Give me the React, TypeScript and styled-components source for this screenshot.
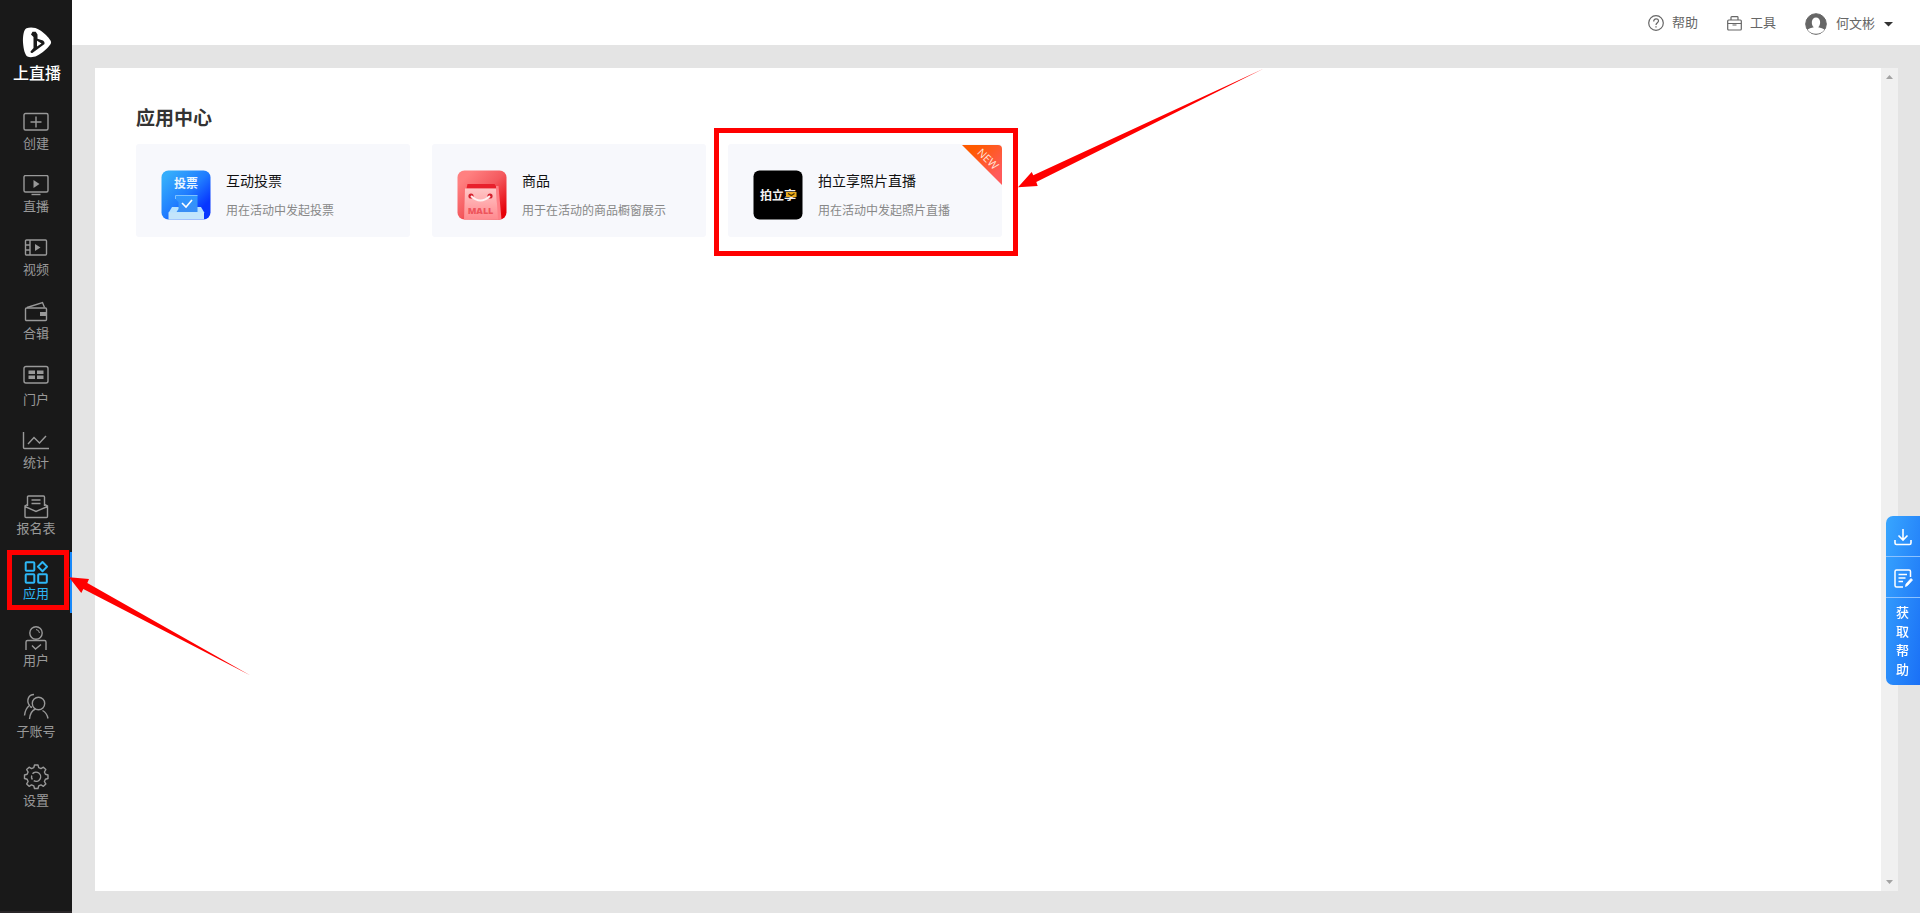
import React from 'react';
import styled, { createGlobalStyle, css } from 'styled-components';

const GlobalStyle = createGlobalStyle`
  *, *::before, *::after { box-sizing: border-box; }
  body {
    margin: 0;
    background: #e4e4e4;
    color: #333;
    font-family: "Liberation Sans", "Noto Sans CJK SC", sans-serif;
    font-size: 13px;
  }
  a { color: inherit; text-decoration: none; }
  button { font: inherit; color: inherit; border: 0; background: none; padding: 0; cursor: pointer; }
  svg { display: block; flex: none; }
`;

const Page = styled.div`
  display: flex;
  height: 100vh;
  overflow: hidden;
`;

const Sidebar = styled.aside`
  flex: none;
  width: 72px;
  border-bottom: 2px solid #2a2628;
  background: #191919;
  color: #999;
`;

const Brand = styled.a`
  display: flex;
  flex-direction: column;
  align-items: center;
  gap: 6px;
  height: 104px;
  padding: 27px 0 0 2px;
  color: #fff;
  font-size: 16px;
  font-weight: 500;
  line-height: 20px;
`;

const Nav = styled.nav`
  display: flex;
  flex-direction: column;
  gap: 4px;
`;

const NavLink = styled.a<{ $active?: boolean }>`
  position: relative;
  display: flex;
  flex-direction: column;
  align-items: center;
  padding: 8px 0 9px;
  line-height: 20px;
  ${(p) =>
    p.$active &&
    css`
      color: #2db7f5;
      box-shadow: inset -2px 0 0 #1989fa;
    `}
`;

const Main = styled.div`
  flex: 1;
  min-width: 0;
  display: flex;
  flex-direction: column;
`;

const Header = styled.header`
  flex: none;
  display: flex;
  justify-content: flex-end;
  align-items: flex-start;
  height: 45px;
  padding: 12px 27px 0 0;
  background: #fff;
  color: #666;
  line-height: 22px;
`;

const HeaderLink = styled.a`
  display: flex;
  align-items: center;
  gap: 8px;
  margin-right: 29px;
`;

const Account = styled.button`
  display: flex;
  align-items: center;
  gap: 9px;
  margin-top: 1px;
`;

const Workspace = styled.div`
  flex: 1;
  min-height: 0;
  display: flex;
  padding: 23px 22px 22px 23px;
`;

const Panel = styled.main`
  flex: 1;
  min-width: 0;
  padding: 38px 41px;
  background: #fff;
`;

const ScrollTrack = styled.div`
  flex: none;
  display: flex;
  flex-direction: column;
  justify-content: space-between;
  align-items: center;
  width: 17px;
  padding: 7px 0;
  background: #f0f0f0;
  color: #a3a3a3;
`;

const Title = styled.h1`
  margin: 0 0 12px;
  color: #333;
  font-size: 19px;
  line-height: 26px;
  font-weight: 700;
`;

const Cards = styled.div`
  display: flex;
  flex-wrap: wrap;
  gap: 22px;
`;

const Card = styled.a`
  position: relative;
  display: flex;
  gap: 15px;
  width: 274px;
  height: 93px;
  padding: 26px 0 0 25px;
  border-radius: 3px;
  background: #f7f8fc;
`;

const CardText = styled.div`
  display: flex;
  flex-direction: column;
  gap: 9px;
  padding-top: 1px;
`;

const CardName = styled.h2`
  margin: 0;
  color: #111;
  font-size: 14px;
  line-height: 21px;
  font-weight: 400;
`;

const CardNote = styled.p`
  margin: 0;
  color: #888;
  font-size: 12px;
  line-height: 20px;
  white-space: nowrap;
`;

const NewRibbon = styled.span`
  position: absolute;
  top: 1px;
  right: 0;
`;

const Frame = styled.span<{ $inset: string }>`
  position: absolute;
  inset: ${(p) => p.$inset};
  border: 5px solid #f00;
  pointer-events: none;
`;

const Pointer = styled.svg<{ $left: number; $top: number }>`
  position: absolute;
  z-index: 2;
  left: ${(p) => p.$left}px;
  top: ${(p) => p.$top}px;
  pointer-events: none;
`;

const HelpDock = styled.div`
  position: fixed;
  z-index: 3;
  right: 0;
  bottom: 228px;
  width: 34px;
  display: flex;
  flex-direction: column;
  border-radius: 7px 0 0 7px;
  background: linear-gradient(100deg, #38a6ff, #1a70f6);
  color: #fff;
`;

const DockButton = styled.button`
  display: flex;
  align-items: center;
  justify-content: center;
  height: 41px;
  padding-top: 2px;
  border-bottom: 1px solid #8cc2ff;
  color: #fff;
`;

const DockLabel = styled.button`
  padding: 5px 11px 6px 10px;
  color: #fff;
  font-size: 13px;
  font-weight: 500;
  line-height: 19px;
`;

type Item = { label: string; height: number; art: React.ReactNode; active?: boolean };

const items: Item[] = [
  {
    label: '创建',
    height: 22,
    art: (
      <>
        <rect x="2" y="1.5" width="24" height="16.5" rx="1.5" />
        <path d="M14 4.5v11M8.500 10h11" />
      </>
    ),
  },
  {
    label: '直播',
    height: 22,
    art: (
      <>
        <rect x="2" y="0.500" width="24" height="16.500" rx="1.500" />
        <path d="M9.500 19.500h9" />
        <path d="M11.500 5v8l6-4z" fill="currentColor" stroke="none" />
      </>
    ),
  },
  {
    label: '视频',
    height: 22,
    art: (
      <>
        <rect x="3.500" y="2" width="21" height="15" rx="1" />
        <path d="M8 2v15M3.500 7H8M3.500 12H8" />
        <path d="M13 6v7l5.500-3.500z" fill="currentColor" stroke="none" />
      </>
    ),
  },
  {
    label: '合辑',
    height: 23,
    art: (
      <>
        <rect x="3.500" y="7" width="21" height="12.500" rx="1" />
        <path d="M5 6.500 20.500 1.500 22.500 6.500" />
        <rect x="18" y="11" width="6.500" height="4" fill="currentColor" stroke="none" />
      </>
    ),
  },
  {
    label: '门户',
    height: 25,
    art: (
      <>
        <rect x="2" y="1.500" width="24" height="16.500" rx="2" />
        <path
          d="M6.500 5.500h6.500v3.500H6.500zM15 5.500h6.500v3.500H15zM6.500 10.500h6.500v3.500H6.500zM15 10.500h6.500v3.500H15z"
          fill="currentColor"
          stroke="none"
        />
      </>
    ),
  },
  {
    label: '统计',
    height: 22,
    art: (
      <>
        <path d="M1.500 1v15.500q0 1 1 1H27" />
        <path d="m6 13 6-6.500 5.500 5.500L24 5" />
      </>
    ),
  },
  {
    label: '报名表',
    height: 25,
    art: (
      <>
        <path d="M5.500 12V3q0-1 1-1h15q1 0 1 1v9" />
        <path d="M9.500 6h9M9.500 9.500h9" />
        <path d="M5.500 10.500 3 12v10.500q0 1 1 1h20.500q1 0 1-1V12l-3-1.500M3 12.500l11 5 11.500-5" />
      </>
    ),
  },
  {
    label: '应用',
    height: 24,
    active: true,
    art: (
      <g strokeWidth="2">
        <rect x="3.700" y="2.200" width="8.600" height="8.600" rx=".8" />
        <rect x="3.700" y="14.200" width="8.600" height="8.600" rx=".8" />
        <rect x="16.200" y="14.200" width="8.600" height="8.600" rx=".8" />
        <path d="m20.500 2 4.600 4.600-4.600 4.600-4.600-4.600z" strokeLinejoin="round" />
      </g>
    ),
  },
  {
    label: '用户',
    height: 26,
    art: (
      <>
        <circle cx="14" cy="8" r="6.200" />
        <path d="M14 4.500q3 .300 3.500 3.500" strokeWidth="1" />
        <path d="M4 25v-8q0-1.500 1.500-1.500h17q1.500 0 1.500 1.500v8M10 20.500l3.500 3.500 5.500-4.500" />
      </>
    ),
  },
  {
    label: '子账号',
    height: 30,
    art: (
      <>
        <circle cx="16.500" cy="11.500" r="6.200" />
        <path d="M7.500 27q.8-8 6-10M20.500 18.500q4.500 2.500 5.500 8" />
        <path d="M12 2.500C6.500 2.500 4 8.500 7.500 13.500 4 16 3 19 2.500 23.500M8 14.500l2 1" />
      </>
    ),
  },
  {
    label: '设置',
    height: 28,
    art: (
      <>
        <path
          d="M11.800 4.600 12.500 2h3.500l.700 2.600 2.300 1 2.400-1.400 2.400 2.400-1.400 2.400 1 2.300 2.600.700v3.500l-2.600.700-1 2.300 1.400 2.400-2.400 2.400-2.400-1.400-2.300 1-.700 2.600h-3.500l-.700-2.600-2.300-1-2.400 1.400-2.400-2.400 1.400-2.400-1-2.300L2.500 15.500V12l2.600-.700 1-2.300-1.400-2.400 2.400-2.400 2.400 1.400z"
          strokeLinejoin="round"
        />
        <path d="M10.500 10.800a4.600 4.600 0 1 1 1.200 6.900M9.700 12.500a4.600 4.600 0 0 0 .7 4" />
      </>
    ),
  },
];

function NavIcon({ height, children }: { height: number; children: React.ReactNode }) {
  return (
    <svg
      width="28"
      height={height}
      viewBox={`0 0 28 ${height}`}
      fill="none"
      stroke="currentColor"
      strokeWidth="1.400"
      aria-hidden="true"
    >
      {children}
    </svg>
  );
}

function VoteIcon() {
  return (
    <svg width="50" height="50" viewBox="0 0 50 50" aria-hidden="true">
      <defs>
        <linearGradient id="vote" x1="0" y1="0" x2="1" y2="1">
          <stop offset=".1" stopColor="#35adfb" />
          <stop offset=".5" stopColor="#207cff" />
          <stop offset=".8" stopColor="#0736ff" />
        </linearGradient>
        <linearGradient id="slip" x1="0" y1="0" x2="0" y2="1">
          <stop stopColor="#2d96ff" />
          <stop offset="1" stopColor="#3a8ef5" />
        </linearGradient>
      </defs>
      <rect x=".5" y=".5" width="49" height="49" rx="7" fill="url(#vote)" />
      <path d="M11 37h29l3.500 6H7.500z" fill="#b8e2ff" />
      <path d="M7.500 42.500h35.500V49.500h-35.500z" fill="#c3e5fb" />
      <path d="M14.500 25.500h22V42h-21l2-3v-7l-3-3z" fill="url(#slip)" />
      <path d="M14.500 29v-3.500h22" fill="none" stroke="#7dc2ff" strokeWidth="1" />
      <path d="m21 33 4 4 6-7" fill="none" stroke="#fff" strokeWidth="1.600" />
      <text x="25" y="18" textAnchor="middle" fontSize="12" fontWeight="700" fill="#e9f6ff">
        投票
      </text>
    </svg>
  );
}

function MallIcon() {
  return (
    <svg width="50" height="50" viewBox="0 0 50 50" aria-hidden="true">
      <defs>
        <linearGradient id="mall" x1="0" y1="0" x2="1" y2="1">
          <stop offset=".15" stopColor="#ff8080" />
          <stop offset=".5" stopColor="#f45a5f" />
          <stop offset=".9" stopColor="#e60008" />
        </linearGradient>
        <linearGradient id="bag" x1="0" y1="0" x2="0" y2="1">
          <stop stopColor="#ffc6c6" />
          <stop offset="1" stopColor="#ff8a8f" />
        </linearGradient>
      </defs>
      <rect x=".5" y=".5" width="49" height="49" rx="7" fill="url(#mall)" />
      <path d="M10.500 14h27l3 4.500h-31z" fill="#e8202c" />
      <path d="M39 16h2.500l3 33.500H40z" fill="#ff8087" />
      <path d="M8 18.500h31l2 31H7z" fill="url(#bag)" />
      <circle cx="14" cy="26" r="2.600" fill="#d4202d" />
      <circle cx="33" cy="26" r="2.600" fill="#d4202d" />
      <path d="M14 26q9.500 9 19 0" fill="none" stroke="#fff0f0" strokeWidth="2" />
      <text
        x="23.500"
        y="44"
        textAnchor="middle"
        fontFamily="Open Sans, sans-serif"
        fontSize="9"
        fontWeight="800"
        fill="#ee555c"
      >
        MALL
      </text>
    </svg>
  );
}

function PhotoIcon() {
  return (
    <svg width="50" height="50" viewBox="0 0 50 50" aria-hidden="true">
      <rect x=".5" y=".5" width="49" height="49" rx="6" fill="#000" />
      <text x="7" y="30" fontSize="12" fontWeight="700" fill="#f2f2f2">
        拍立享
      </text>
      <path d="M33 22h10.500v5H33z" fill="#e8a91c" />
      <path d="m35 23.500 3.300 2 3.200-2" fill="none" stroke="#3d2b00" strokeWidth="1.300" />
    </svg>
  );
}

const apps = [
  { name: '互动投票', note: '用在活动中发起投票', icon: <VoteIcon /> },
  { name: '商品', note: '用于在活动的商品橱窗展示', icon: <MallIcon /> },
  { name: '拍立享照片直播', note: '用在活动中发起照片直播', icon: <PhotoIcon />, isNew: true },
];

function App() {
  return (
    <Page>
      <GlobalStyle />
      <Sidebar>
        <Brand href="#">
          <svg width="30" height="31" viewBox="0 0 30 31" aria-hidden="true">
            <path
              d="M4.500 1.200C8 .2 13 0 18 3.200c4 2.500 8.500 6.800 10.500 10.300.8 1.400.8 2.600-.2 4-3 4.300-8.300 8.800-13.300 11.300-3.500 1.700-7.500 1.800-9.500.8C3 28.200 1.500 22.500 1 15.500.8 9.500 1.500 2.500 4.500 1.200z"
              fill="#fff"
            />
            <path
              d="M10.500 4.800h3.200l1.800 2.700v4.200l5.500 1.800q2 1.300 1.500 3.500L10.300 26q-1.800.3-1.800-1.500l3-3.500V10L9 7.500z"
              fill="#191919"
            />
            <path d="m15 13.800 4.500 2.700-4.500 3z" fill="#fff" />
          </svg>
          上直播
        </Brand>
        <Nav>
          {items.map((item) => (
            <NavLink key={item.label} href="#" $active={item.active}>
              <NavIcon height={item.height}>{item.art}</NavIcon>
              {item.label}
              {item.active && (
                <>
                  <Frame $inset="-2px 3px 3px 7px" />
                  <Pointer $left={69} $top={20} width="182" height="104" viewBox="0 0 182 104">
                    <path d="M0 5.300 20 7l-1.700 4L181.500 103.500 14.300 17l-2 4z" fill="#f00" />
                  </Pointer>
                </>
              )}
            </NavLink>
          ))}
        </Nav>
      </Sidebar>
      <Main>
        <Header>
          <HeaderLink href="#">
            <svg width="16" height="16" viewBox="0 0 16 16" fill="none" stroke="currentColor" aria-hidden="true">
              <circle cx="8" cy="8" r="7.300" strokeWidth="1.200" />
              <path d="M5.700 6.500C5.700 3 10.500 3 10.500 6c0 1.800-2.500 1.700-2.500 4" strokeWidth="1.200" />
              <path d="M8 11.200v1.300" strokeWidth="1.300" />
            </svg>
            帮助
          </HeaderLink>
          <HeaderLink href="#">
            <svg width="15" height="15" viewBox="0 0 15 15" fill="none" stroke="currentColor" aria-hidden="true">
              <rect x=".7" y="4" width="13.600" height="10" rx="1" strokeWidth="1.200" />
              <path d="M4 4V1.500q0-.8.800-.8h5.400q.8 0 .8.800V4M.7 7.500h13.600M5.500 9h4" strokeWidth="1.200" />
            </svg>
            工具
          </HeaderLink>
          <Account type="button">
            <svg width="22" height="22" viewBox="0 0 22 22" aria-hidden="true">
              <circle cx="11" cy="11" r="10.300" fill="#666" stroke="#666" />
              <path
                d="M2.500 16.500Q4.500 15 8.800 14.300C5.800 12 6 4.500 11 4.500s5.200 7.500 2.200 9.800q4.300.7 6.300 2.200Q16.500 20.800 11 20.800T2.500 16.500z"
                fill="#fff"
              />
            </svg>
            何文彬
            <svg width="9" height="5" viewBox="0 0 9 5" aria-hidden="true">
              <path d="M0 0h9L4.500 4.500z" fill="#333" />
            </svg>
          </Account>
        </Header>
        <Workspace>
          <Panel>
            <Title>应用中心</Title>
            <Cards>
              {apps.map((app) => (
                <Card key={app.name} href="#">
                  {app.icon}
                  <CardText>
                    <CardName>{app.name}</CardName>
                    <CardNote>{app.note}</CardNote>
                  </CardText>
                  {app.isNew && (
                    <>
                      <NewRibbon>
                        <svg width="40" height="40" viewBox="0 0 40 40" aria-hidden="true">
                          <defs>
                            <linearGradient id="ribbon" x1="0" y1="0" x2="1" y2="1">
                              <stop offset=".2" stopColor="#ff5a00" />
                              <stop offset=".8" stopColor="#ff5a5a" />
                            </linearGradient>
                          </defs>
                          <path d="M0 0h36q4 0 4 4v36z" fill="url(#ribbon)" />
                          <text
                            x="26"
                            y="18"
                            textAnchor="middle"
                            fontFamily="Open Sans, sans-serif"
                            fontSize="11"
                            fill="#ffe6dc"
                            transform="rotate(45 26 14)"
                          >
                            NEW
                          </text>
                        </svg>
                      </NewRibbon>
                      <Frame $inset="-16px -16px -19px -14px" />
                      <Pointer $left={290} $top={-76} width="246" height="120" viewBox="0 0 246 120">
                        <path d="M0 119.200 13.700 104l1.600 3.300L246 .5 18.300 114l1.400 4z" fill="#f00" />
                      </Pointer>
                    </>
                  )}
                </Card>
              ))}
            </Cards>
          </Panel>
          <ScrollTrack aria-hidden="true">
            <svg width="7" height="4" viewBox="0 0 7 4">
              <path d="M0 4h7L3.500 0z" fill="currentColor" />
            </svg>
            <svg width="7" height="4" viewBox="0 0 7 4">
              <path d="M0 0h7L3.500 4z" fill="currentColor" />
            </svg>
          </ScrollTrack>
        </Workspace>
      </Main>
      <HelpDock>
        <DockButton type="button" aria-label="下载">
          <svg width="18" height="18" viewBox="0 0 18 18" fill="none" stroke="currentColor" strokeWidth="1.600" aria-hidden="true">
            <path d="M9 1v10.500M4.500 7.500 9 12l4.500-4.500M1 12v3q0 1.500 1.500 1.500h13q1.500 0 1.500-1.500v-3" />
          </svg>
        </DockButton>
        <DockButton type="button" aria-label="反馈">
          <svg width="19" height="19" viewBox="0 0 19 19" fill="none" stroke="currentColor" strokeWidth="1.500" aria-hidden="true">
            <path d="M16.500 8V2.500Q16.500 1 15 1H2.500Q1 1 1 2.500v14Q1 18 2.500 18H9M4.500 5.500H13M4.500 9h7M4.500 12.500H9" />
            <path d="m11.500 17.500.5-2.500 5-5.500 1.500 1.500-5 5.500z" fill="currentColor" strokeWidth=".8" />
          </svg>
        </DockButton>
        <DockLabel type="button">获取帮助</DockLabel>
      </HelpDock>
    </Page>
  );
}

export default App;
